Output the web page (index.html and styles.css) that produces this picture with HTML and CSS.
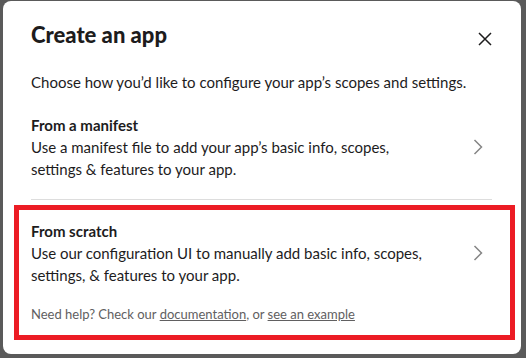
FILE: index.html
```html
<!DOCTYPE html>
<html lang="en">
<head>
<meta charset="utf-8">
<title>Create an app</title>
<link rel="stylesheet" href="styles.css">
</head>
<body>
<div class="modal">
  <div class="header">
    <h1 class="title">Create an app</h1>
    <button class="close" aria-label="Close">
      <svg width="14" height="14" viewBox="0 0 14 14"><path d="M1 1L13 13M13 1L1 13" stroke="#1d1c1d" stroke-width="1.5" fill="none"/></svg>
    </button>
  </div>
  <p class="subtitle">Choose how you’d like to configure your app’s scopes and settings.</p>
  <div class="option divided">
    <div class="option-text">
      <div class="option-title">From a manifest</div>
      <div class="option-desc">Use a manifest file to add your app’s basic info, scopes, settings &amp; features to your app.</div>
    </div>
    <div class="chev"><svg width="10" height="16" viewBox="0 0 10 16"><path d="M1.5 1L8.5 8L1.5 15" stroke="#868686" stroke-width="1.5" fill="none"/></svg></div>
  </div>
  <div class="option">
    <div class="option-text">
      <div class="option-title">From scratch</div>
      <div class="option-desc">Use our configuration UI to manually add basic info, scopes, settings, &amp; features to your app.</div>
    </div>
    <div class="chev"><svg width="10" height="16" viewBox="0 0 10 16"><path d="M1.5 1L8.5 8L1.5 15" stroke="#868686" stroke-width="1.5" fill="none"/></svg></div>
  </div>
  <p class="help">Need help? Check our <a href="#">documentation</a>, or <a href="#">see an example</a></p>
  <div class="highlight"></div>
</div>
</body>
</html>
```
FILE: styles.css
```css
html, body {
  margin: 0;
  height: 100%;
}
body {
  background: #5a5a5a;
  padding: 1px 5px 4px 3px;
  box-sizing: border-box;
  font-family: Lato, "Open Sans", sans-serif;
  color: #1d1c1d;
}
.modal {
  position: relative;
  background: #fff;
  border-radius: 8px;
  height: 353px;
  box-sizing: border-box;
  padding: 20px 29px 0 28px;
}
.header {
  display: flex;
  justify-content: space-between;
  align-items: flex-start;
}
.title {
  margin: 0;
  font-size: 22px;
  line-height: 28px;
  font-weight: 900;
}
.close {
  width: 28px;
  height: 28px;
  margin: 4px -7px 0 0;
  padding: 0;
  border: 0;
  background: none;
  display: flex;
  align-items: center;
  justify-content: center;
}
.subtitle {
  margin: 18px 0 0;
  font-size: 15px;
  line-height: 22px;
}
.option {
  display: flex;
  align-items: center;
  padding: 20px 0 0;
}
.option.divided {
  margin-top: 1px;
  padding-bottom: 19px;
  border-bottom: 1px solid #dddddd;
}
.option-text {
  flex: 1;
  font-size: 15px;
  line-height: 22px;
}
.option-title {
  font-weight: 700;
}
.chev {
  width: 61px;
  display: flex;
  justify-content: flex-end;
  padding-right: 9px;
  box-sizing: border-box;
}
.chev svg {
  display: block;
}
.help {
  margin: 19px 0 0;
  font-size: 13px;
  line-height: 18px;
  color: #616061;
}
.help a {
  color: #616061;
  text-decoration: underline;
}
.highlight {
  position: absolute;
  left: 11px;
  top: 204px;
  width: 501px;
  height: 135px;
  border: 5px solid #ec1c24;
  box-sizing: border-box;
  pointer-events: none;
}
```
